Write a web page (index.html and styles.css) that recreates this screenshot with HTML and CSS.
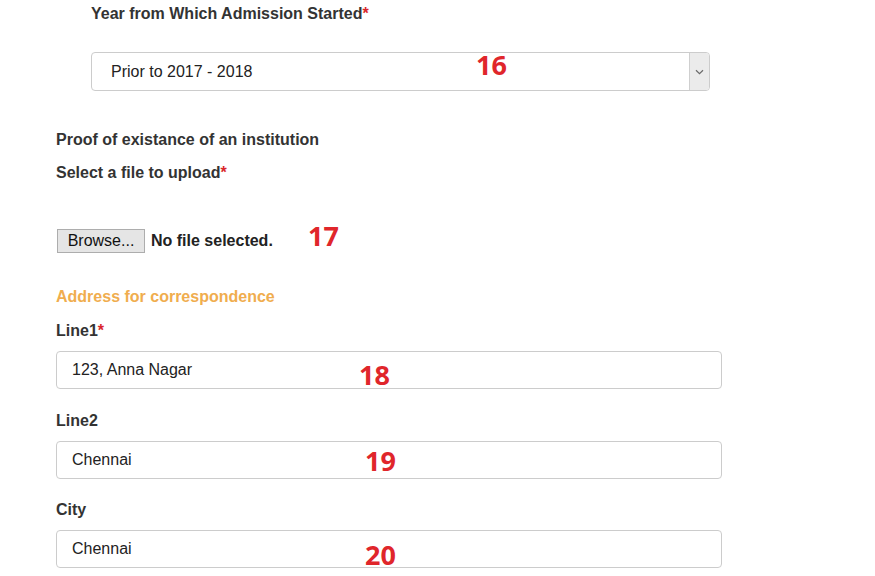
FILE: index.html
```html
<!DOCTYPE html>
<html lang="en">
<head>
  <meta charset="UTF-8">
  <meta name="viewport" content="width=device-width, initial-scale=1.0">
  <title>Institution Registration</title>
  <link rel="stylesheet" href="styles.css">
</head>
<body>
  <div class="container">
    <div class="form-group indented">
      <label class="field-label">Year from Which Admission Started<span class="req">*</span></label>
      <div class="select-box">
        <span class="select-text">Prior to 2017 - 2018</span>
        <span class="select-arrow">
          <svg width="9" height="6" viewBox="0 0 9 6"><path d="M1 1.2 L4.5 4.6 L8 1.2" fill="none" stroke="#6a6a6a" stroke-width="1.2"/></svg>
        </span>
        <span class="marker m16">16</span>
      </div>
    </div>

    <div class="form-group upload">
      <p class="field-label">Proof of existance of an institution</p>
      <p class="field-label second">Select a file to upload<span class="req">*</span></p>
      <div class="file-row">
        <button class="browse">Browse...</button>
        <span class="file-status">No file selected.</span>
        <span class="marker m17">17</span>
      </div>
    </div>

    <h4 class="section-title">Address for correspondence</h4>

    <div class="form-group first">
      <label class="field-label" for="line1">Line1<span class="req">*</span></label>
      <div class="input-wrap">
        <input type="text" id="line1" value="123, Anna Nagar">
        <span class="marker m18">18</span>
      </div>
    </div>

    <div class="form-group">
      <label class="field-label" for="line2">Line2</label>
      <div class="input-wrap">
        <input type="text" id="line2" value="Chennai">
        <span class="marker m19">19</span>
      </div>
    </div>

    <div class="form-group last">
      <label class="field-label" for="city">City</label>
      <div class="input-wrap">
        <input type="text" id="city" value="Chennai">
        <span class="marker m20">20</span>
      </div>
    </div>
  </div>
</body>
</html>
```

FILE: styles.css
```css
body {
  font-family: 'Liberation Sans', Arial, sans-serif;
  background-color: #fff;
  color: #333;
  margin: 0;
}

.container {
  padding: 4px 0 0 56px;
  width: 666px;
}

.field-label {
  display: block;
  margin: 0;
  font-size: 16px;
  font-weight: bold;
  line-height: 20px;
  color: #333;
}

.req {
  color: #d9262b;
}

.form-group {
  margin-top: 22px;
}

.indented {
  margin-top: 0;
  padding-left: 35px;
}

.indented .field-label {
  margin-bottom: 28px;
}

.select-box {
  position: relative;
  display: flex;
  align-items: center;
  width: 617px;
  height: 37px;
  border: 1px solid #ccc;
  border-radius: 4px;
  background-color: #fff;
}

.select-text {
  flex: 1;
  padding-left: 19px;
  font-size: 16px;
  color: #222;
}

.select-arrow {
  display: flex;
  align-items: center;
  justify-content: center;
  width: 19px;
  height: 37px;
  background-color: #ebebeb;
  border-left: 1px solid #cfcfcf;
  border-radius: 0 3px 3px 0;
}

.upload {
  margin-top: 39px;
}

.upload .second {
  margin-top: 13px;
}

.file-row {
  position: relative;
  display: flex;
  align-items: center;
  margin-top: 46px;
}

.browse {
  width: 88px;
  height: 24px;
  margin-left: 1px;
  padding: 0;
  font-family: 'Liberation Sans', Arial, sans-serif;
  font-size: 16px;
  color: #111;
  background-color: #e5e5e5;
  border: 1px solid #adadad;
  border-radius: 0;
}

.file-status {
  margin-left: 6px;
  font-size: 16px;
  font-weight: bold;
  color: #222;
}

.section-title {
  margin: 34px 0 0 0;
  font-size: 16px;
  font-weight: bold;
  line-height: 20px;
  color: #f0ad4e;
}

.form-group.first {
  margin-top: 14px;
}

.form-group.last {
  margin-top: 21px;
}

.input-wrap {
  position: relative;
  margin-top: 10px;
}

input[type="text"] {
  display: block;
  box-sizing: border-box;
  width: 666px;
  height: 38px;
  padding: 0 15px;
  font-family: 'Liberation Sans', Arial, sans-serif;
  font-size: 16px;
  color: #222;
  border: 1px solid #ccc;
  border-radius: 4px;
  outline: none;
}

.marker {
  position: absolute;
  font-family: 'Open Sans', sans-serif;
  font-size: 27px;
  font-weight: bold;
  line-height: 1;
  color: #e0262b;
}

.m16 { left: 384px; top: -2px; }
.m17 { left: 252px; top: -7px; }
.m18 { left: 303px; top: 10px; }
.m19 { left: 309px; top: 6px; }
.m20 { left: 309px; top: 11px; }
```
